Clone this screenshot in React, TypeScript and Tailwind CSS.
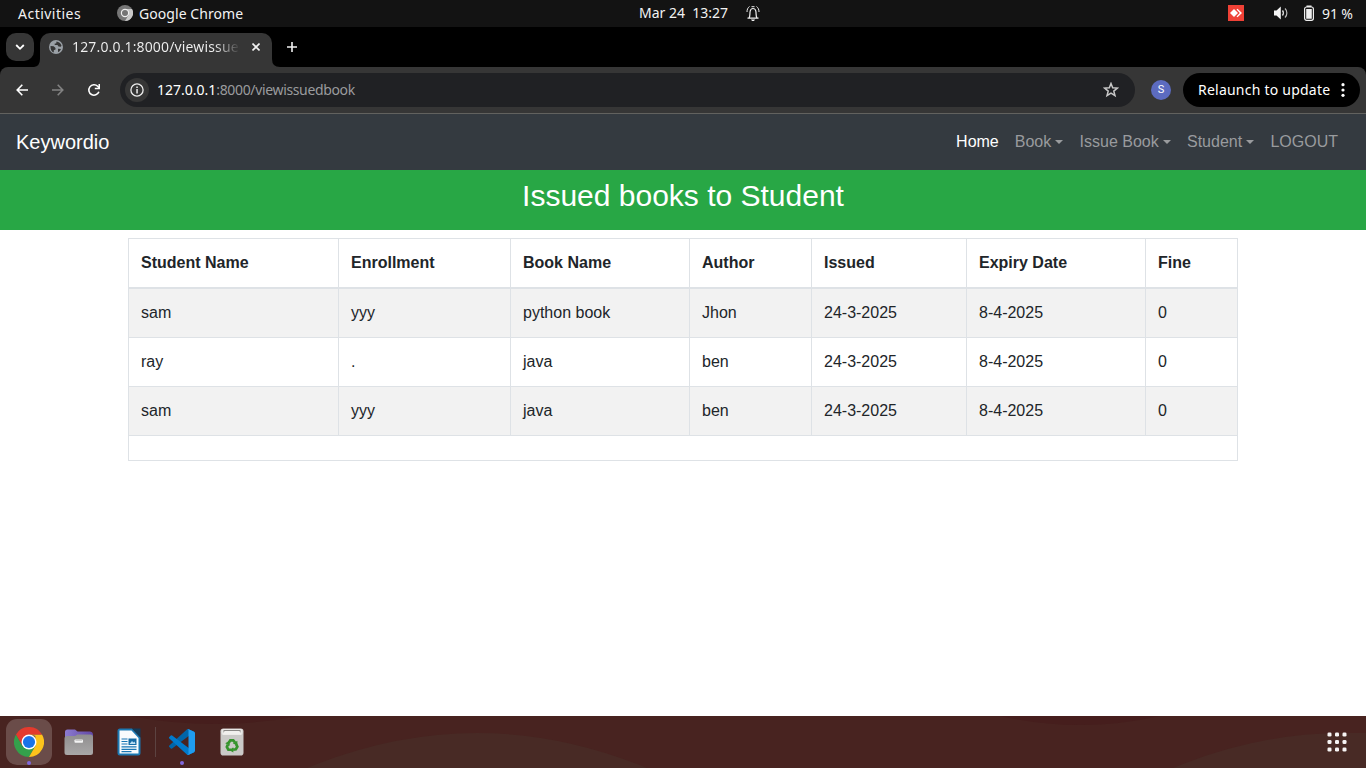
import React from "react";

const UI = "font-['Noto_Sans','Open_Sans',sans-serif]";

const students = [
  ["sam", "yyy", "python book", "Jhon", "24-3-2025", "8-4-2025", "0"],
  ["ray", ".", "java", "ben", "24-3-2025", "8-4-2025", "0"],
  ["sam", "yyy", "java", "ben", "24-3-2025", "8-4-2025", "0"],
];

const headings = ["Student Name", "Enrollment", "Book Name", "Author", "Issued", "Expiry Date", "Fine"];

function TopBar() {
  return (
    <div className={`${UI} flex h-[27px] shrink-0 items-center bg-[#131313] text-[14px] leading-[27px] text-[#f2f2f2]`}>
      <span className="ml-[18px] w-[99px] whitespace-nowrap tracking-[0.48px]">Activities</span>
      <svg width="16" height="16" viewBox="0 0 16 16" className="mr-[6px] mt-[-1px] shrink-0">
        <circle cx="8" cy="8" r="8" fill="#777" />
        <path d="M8 4h7A8 8 0 0 1 8 16l3.6-6z" fill="#c9c9c9" />
        <circle cx="8" cy="8" r="4.2" fill="#eee" />
        <circle cx="8" cy="8" r="3" fill="#747474" />
      </svg>
      <span className="w-[500px] whitespace-nowrap tracking-[0.06px]">Google Chrome</span>
      <span className="mt-[-2px] w-[107px] whitespace-pre">Mar 24  13:27</span>
      <svg width="14" height="17" viewBox="0 0 14 17" fill="none" stroke="#eee" className="mt-[-1px] shrink-0">
        <path d="M1.500 13.200h11M3 13c1.300-1.800.7-4.200 1.100-6.500C4.400 4.500 5.500 3.500 7 3.500s2.600 1 2.900 3c.4 2.300-.2 4.700 1.100 6.500" strokeWidth="1.200" />
        <path d="M1 7c0-2.500.8-4.300 2.500-5.500M13 7c0-2.500-.8-4.300-2.500-5.500M5.500 1.700h3" strokeWidth="1" />
        <path d="M5 14.500h4l-1 1.400H6z" fill="#eee" stroke="none" />
      </svg>
      <svg width="16" height="16" viewBox="0 0 16 16" className="ml-[468px] mt-[-1px] shrink-0">
        <path d="M0 0h16v16H0z" fill="#ef4136" />
        <path d="M2 8l4-4 4 4-4 4z" fill="#fff" />
        <path d="M8.500 4.600l1-.8L14 8l-4.500 4.200-1-.8L11.800 8z" fill="#fff" />
      </svg>
      <svg width="16" height="16" viewBox="0 0 16 16" className="ml-[29px] mt-[-1px] shrink-0" fill="none" stroke="#eee">
        <path d="M1 5.500h2.500L7.800 1.500v13l-4.300-4H1z" fill="#f4f4f4" stroke="none" />
        <path d="M9.500 5.500c1.100 1.300 1.100 3.700 0 5" strokeWidth="1.300" />
        <path d="M12 3.500c2.500 2.400 2.500 6.600 0 9" strokeWidth="1.200" stroke="#bbb" />
      </svg>
      <svg width="10" height="16" viewBox="0 0 10 16" className="ml-[15px] mt-[-1px] shrink-0">
        <rect x=".6" y="2" width="8.800" height="13.300" rx="2" fill="none" stroke="#eee" strokeWidth="1.200" />
        <path d="M2.500.5h5V2h-5zM2.200 4h5.600v9.700H2.200z" fill="#eee" />
      </svg>
      <span className="ml-[8px] whitespace-nowrap [word-spacing:-0.500px]">91 %</span>
    </div>
  );
}

function TabStrip() {
  return (
    <div className={`${UI} flex h-[40px] shrink-0 items-end bg-black text-[14px] text-[#f1f1f1]`}>
      <div className="mb-[6px] ml-[6px] flex size-[28px] items-center justify-center rounded-[10px] bg-[#363636]">
        <svg width="10" height="8" viewBox="0 0 10 8" fill="none" stroke="#fff" strokeWidth="1.800"><path d="M1.200 2L5 5.800 8.800 2" /></svg>
      </div>
      <svg width="6" height="8" viewBox="0 0 6 8"><path d="M6 0v8H0Q6 7 6 0z" fill="#363636" /></svg>
      <div className="flex h-[34px] w-[232px] items-center rounded-t-[10px] bg-[#363636]">
        <svg width="14" height="14" viewBox="0 0 14 14" className="ml-[9px] mt-[-6px] shrink-0">
          <circle cx="7" cy="7" r="7" fill="#9aa0a6" />
          <path d="M1.500 6l3.200.2 1.800 1.700v1.500l-1.700.8v2.400C2.600 11.600 1.200 9.500 1.500 6zM7.500 1.500c2.300.2 4.300 1.700 5 4.300l-.8 1-2.200-.2-1-1.600-2.800-.1V3.400h1.500zM9 8.700l3 .2c-.6 1.500-1.700 2.600-3 3.200z" fill="#363636" />
        </svg>
        <span className="ml-[9px] mt-[-8px] w-[168px] overflow-hidden whitespace-nowrap bg-[linear-gradient(90deg,#f1f1f1_85%,#363636_100%)] bg-clip-text tracking-[0.150px] text-transparent">127.0.0.1:8000/viewissuedbook</span>
        <svg width="8" height="8" viewBox="0 0 8 8" className="ml-[12px] mt-[-6px] shrink-0" stroke="#f1f1f1" strokeWidth="1.600"><path d="M.5.5l7 7M7.500.5l-7 7" /></svg>
      </div>
      <svg width="8" height="8" viewBox="0 0 8 8"><path d="M0 0v8h8Q0 8 0 0z" fill="#363636" /></svg>
      <svg width="10" height="10" viewBox="0 0 10 10" className="mb-[15px] ml-[7px]" stroke="#f1f1f1" strokeWidth="1.600"><path d="M5 0v10M0 5h10" /></svg>
    </div>
  );
}

function Toolbar() {
  return (
    <div className={`${UI} shrink-0 bg-black text-[14px]`}>
      <div className="flex h-[47px] items-center rounded-t-[8px] border-b border-[#62625f] bg-[#363636]">
        <svg width="12" height="12" viewBox="0 0 12 12" className="ml-[16px] shrink-0" fill="none" stroke="#fff" strokeWidth="1.600"><path d="M12 6H1.200M6.300.8L1.200 6l5.100 5.200" /></svg>
        <svg width="12" height="12" viewBox="0 0 12 12" className="ml-[24px] shrink-0" fill="none" stroke="#828282" strokeWidth="1.600"><path d="M0 6h10.800M5.700.8L10.800 6l-5.100 5.200" /></svg>
        <svg width="14" height="14" viewBox="0 0 14 14" className="ml-[23px] shrink-0">
          <path d="M11.900 8.800A5.200 5.200 0 1 1 10.700 3.300l1.300 1.300" fill="none" stroke="#fff" strokeWidth="1.600" />
          <path d="M13 1v5.200H7.800V4.700h3.700V1z" fill="#fff" />
        </svg>
        <div className="ml-[19px] flex h-[34px] w-[1015px] shrink-0 items-center rounded-full bg-[#202124]">
          <div className="ml-[5px] flex size-[24px] items-center justify-center rounded-full bg-[#363636]">
            <svg width="14" height="14" viewBox="0 0 14 14"><circle cx="7" cy="7" r="6.100" fill="none" stroke="#eee" strokeWidth="1.300" /><path d="M6.300 3.400h1.500v1.500H6.300zM6.300 6h1.500v4.600H6.300z" fill="#eee" /></svg>
          </div>
          <span className="ml-[8px] mt-[-2px] whitespace-nowrap tracking-[-0.350px] text-[#9a9b9e]"><span className="tracking-normal text-white">127.0.0.1</span>:8000/viewissuedbook</span>
          <svg width="16" height="16" viewBox="0 0 16 16" className="ml-auto mr-[16px]" fill="none" stroke="#c8c8c8" strokeWidth="1.500"><path d="M8 1.500l1.700 4.300 4.700.3-3.600 3 1.200 4.600L8 11.200l-4 2.500 1.200-4.600-3.600-3 4.700-.3z" /></svg>
        </div>
        <div className="ml-[16px] flex size-[20px] shrink-0 items-center justify-center rounded-full bg-[#5c6bc0] pt-px font-[Roboto,sans-serif] text-[11px] text-white">S</div>
        <div className="ml-[12px] flex h-[34px] w-[177px] shrink-0 items-center rounded-full bg-black pl-[15px] text-white">
          <span className="mt-[-2px] w-[143px] whitespace-nowrap tracking-[0.230px]">Relaunch to update</span>
          <svg width="4" height="14" viewBox="0 0 4 14" fill="#fff"><circle cx="2" cy="1.700" r="1.600" /><circle cx="2" cy="7" r="1.600" /><circle cx="2" cy="12.300" r="1.600" /></svg>
        </div>
      </div>
    </div>
  );
}

function Menu({ label }: { label: string }) {
  return (
    <a className="ml-[16px] flex items-center text-[#999b9e]">
      {label}
      <i className="ml-[4px] border-x-[4.800px] border-t-[4.800px] border-x-transparent border-t-[#999b9e]" />
      <i className="w-[0.300px]" />
    </a>
  );
}

function Page() {
  return (
    <div className="h-[602px] shrink-0 bg-white font-['Liberation_Sans',Arial,sans-serif] text-[16px] leading-[24px] text-[#212529]">
      <nav className="flex h-[56px] items-center bg-[#343a40] pl-[16px] pr-[28px]">
        <span className="mr-auto text-[20px] leading-[30px] text-white">Keywordio</span>
        <a className="text-white">Home</a>
        <Menu label="Book" />
        <Menu label="Issue Book" />
        <Menu label="Student" />
        <a className="ml-[16px] text-[#999b9e]">LOGOUT</a>
      </nav>
      <h3 className="h-[60px] bg-[#28a745] pt-[8px] text-center text-[30px] leading-[36px] text-white">Issued books to Student</h3>
      <table className="ml-[128px] mt-[8px] w-[1110px] table-fixed border-collapse border border-[#dee2e6]">
        <colgroup>
          <col className="w-[210px]" /><col className="w-[172px]" /><col className="w-[179px]" /><col className="w-[122px]" />
          <col className="w-[155px]" /><col className="w-[179px]" /><col />
        </colgroup>
        <thead>
          <tr className="h-[49px]">
            {headings.map((h) => (
              <th key={h} className="border border-b-2 border-[#dee2e6] px-[12px] py-0 text-left font-bold">{h}</th>
            ))}
          </tr>
        </thead>
        <tbody>
          {students.map((row, i) => (
            <tr key={i} className="h-[49px] first:h-[50px] odd:bg-[#f2f2f2]">
              {row.map((cell, j) => (
                <td key={j} className="border border-[#dee2e6] px-[12px] py-0">{cell}</td>
              ))}
            </tr>
          ))}
          <tr className="h-[25px]"><td colSpan={7} className="border border-[#dee2e6] p-0" /></tr>
        </tbody>
      </table>
    </div>
  );
}

function Chrome() {
  return (
    <svg width="30" height="30" viewBox="0 0 48 48">
      <path d="M3.200 12A24 24 0 0 0 24 48l10.400-18L24 34.500 14 31z" fill="#34a04b" />
      <path d="M44.800 12A24 24 0 0 1 24 48l10.400-18L34 14l-10-2z" fill="#fcc31c" />
      <path d="M24 12h20.800A24 24 0 0 0 3.200 12l10.400 18z" fill="#e33b2e" />
      <circle cx="24" cy="24" r="12" fill="#fff" />
      <circle cx="24" cy="24" r="9.700" fill="#1a73e8" />
    </svg>
  );
}

function Files() {
  return (
    <svg width="30" height="28" viewBox="0 0 30 28">
      <defs>
        <linearGradient id="fg" x1="0" y1="0" x2="0" y2="1"><stop stopColor="#908e8f" /><stop offset="1" stopColor="#a9a8a8" /></linearGradient>
        <linearGradient id="fp" x1="0" y1="0" x2="1" y2="0"><stop stopColor="#8c7bd0" /><stop offset="1" stopColor="#6248a6" /></linearGradient>
      </defs>
      <path d="M1 4a2.500 2.500 0 0 1 2.500-2.500H11l2.500 2H26A3 3 0 0 1 29 6v8H1z" fill="url(#fp)" />
      <path d="M.5 10.500A2.500 2.500 0 0 1 3 8h8l2.500-1.500h13A2.500 2.500 0 0 1 29 9v15.500a2.500 2.500 0 0 1-2.500 2.500H3A2.500 2.500 0 0 1 .5 24.500z" fill="url(#fg)" />
      <rect x="10.500" y="11.500" width="8.500" height="3.300" rx=".8" fill="#f3f3f3" />
      <path d="M11.500 12.300h6.500v.7h-6.500z" fill="#bbb" />
    </svg>
  );
}

function Writer() {
  return (
    <svg width="24" height="28" viewBox="0 0 24 28">
      <path d="M3 .5h12l8.500 9V25A2.500 2.500 0 0 1 21 27.500H3A2.500 2.500 0 0 1 .5 25V3A2.500 2.500 0 0 1 3 .5z" fill="#1b78b2" />
      <path d="M15 .5h8.500v9z" fill="#123b59" />
      <path d="M2.500 2.500h12L21.500 10v15.500h-19z" fill="#f8fbfd" />
      <path d="M4.500 11h6M4.500 13.500h6M4.500 16h6M4.500 18.800h15M4.500 21.300h15M4.500 23.700h10" stroke="#1a77b5" strokeWidth="1.200" />
      <path d="M11.500 10.500h8v6.500h-8z" fill="#156aa5" />
      <path d="M12.500 16l2.500-3 1.500 1.500 1-1 1 2.500z" fill="#b8dcf2" />
    </svg>
  );
}

function Code() {
  return (
    <svg width="26" height="26" viewBox="0 0 100 100">
      <path d="M96.500 10.700L75.900.8a6.200 6.200 0 0 0-7.100 1.200L1.300 63.600a4.200 4.200 0 0 0 0 6.100l5.500 5a4.200 4.200 0 0 0 5.300.2L93.400 13.200c2.700-2 6.600-.1 6.600 3.300v-.2c0-2.400-1.400-4.600-3.500-5.600z" fill="#0065a9" />
      <path d="M96.500 89.300l-20.600 9.900a6.200 6.200 0 0 1-7.100-1.200L1.300 36.400a4.200 4.200 0 0 1 0-6.100l5.500-5a4.200 4.200 0 0 1 5.300-.2l81.300 61.700c2.700 2 6.600.1 6.600-3.300v.2c0 2.400-1.400 4.600-3.500 5.600z" fill="#007acc" />
      <path d="M75.900 99.200a6.200 6.200 0 0 1-7.100-1.200c2.300 2.300 6.200.7 6.200-2.600V4.700c0-3.300-3.900-4.900-6.200-2.600A6.200 6.200 0 0 1 75.900.9l20.600 9.900c2.200 1 3.500 3.200 3.500 5.600v67.200c0 2.400-1.400 4.600-3.500 5.600z" fill="#1f9cf0" />
    </svg>
  );
}

function Trash() {
  return (
    <svg width="24" height="28" viewBox="0 0 24 28">
      <rect x=".5" y=".5" width="23" height="27" rx="2.800" fill="#cbcac8" />
      <rect x="1.500" y="1" width="21" height="6" rx="2" fill="#e8e7e5" />
      <path d="M3.500 2h17v2.500h-17z" fill="#8b8987" />
      <path d="M4.500 3h15l1.500 3.500H3z" fill="#f1f0ee" />
      <g transform="translate(12 17.500)">
        {[0, 120, 240].map((r) => (
          <g key={r} transform={`rotate(${r})`}>
            <path d="M-3.400-2.600L-1.700-5.200h3L3-3" fill="none" stroke="#36942d" strokeWidth="2.700" />
            <path d="M5.400-4.700v4.500L.8-1.900z" fill="#36942d" />
          </g>
        ))}
      </g>
    </svg>
  );
}

function Dock() {
  return (
    <div className="relative h-[52px] shrink-0 overflow-hidden bg-[#482320]">
      <svg width="1366" height="52" viewBox="0 0 1366 52" className="absolute inset-0">
        <path d="M307 52Q477-18 647 52zM1173 52Q1258 17 1343 17h23v35z" fill="#482a25" />
        <path d="M130 0Q215 16 300 0zM1000 0Q1080 18 1160 0z" fill="#461e1d" />
      </svg>
      <div className="relative flex h-full items-start">
        <div className="ml-[6px] mt-[3px] flex h-[46px] w-[46px] flex-col items-center rounded-[11px] bg-[#6a4c49] pt-[8px]">
          <Chrome />
          <i className="mt-[4px] size-[4px] rounded-full bg-[#8067dc]" />
        </div>
        <div className="ml-[12px] mt-[12px]"><Files /></div>
        <div className="ml-[23px] mt-[12px]"><Writer /></div>
        <div className="ml-[14px] mt-[11px] h-[30px] w-px bg-[#5c4341]" />
        <div className="ml-[13px] mt-[13px] flex flex-col items-center"><Code /><i className="mt-[6px] size-[4px] rounded-full bg-[#8067dc]" /></div>
        <div className="ml-[25px] mt-[12px]"><Trash /></div>
        <svg width="20" height="20" viewBox="0 0 20 20" className="ml-auto mr-[19px] mt-[16px]" fill="#f6f4f4">
          {[2.5, 10, 17.5].map((y) => [2.5, 10, 17.5].map((x) => <rect key={`${x}-${y}`} x={x - 2} y={y - 2} width="4" height="4" rx="1.300" />))}
        </svg>
      </div>
    </div>
  );
}

export default function App() {
  return (
    <div className="flex h-[768px] w-[1366px] flex-col overflow-hidden bg-white">
      <TopBar />
      <TabStrip />
      <Toolbar />
      <Page />
      <Dock />
    </div>
  );
}
